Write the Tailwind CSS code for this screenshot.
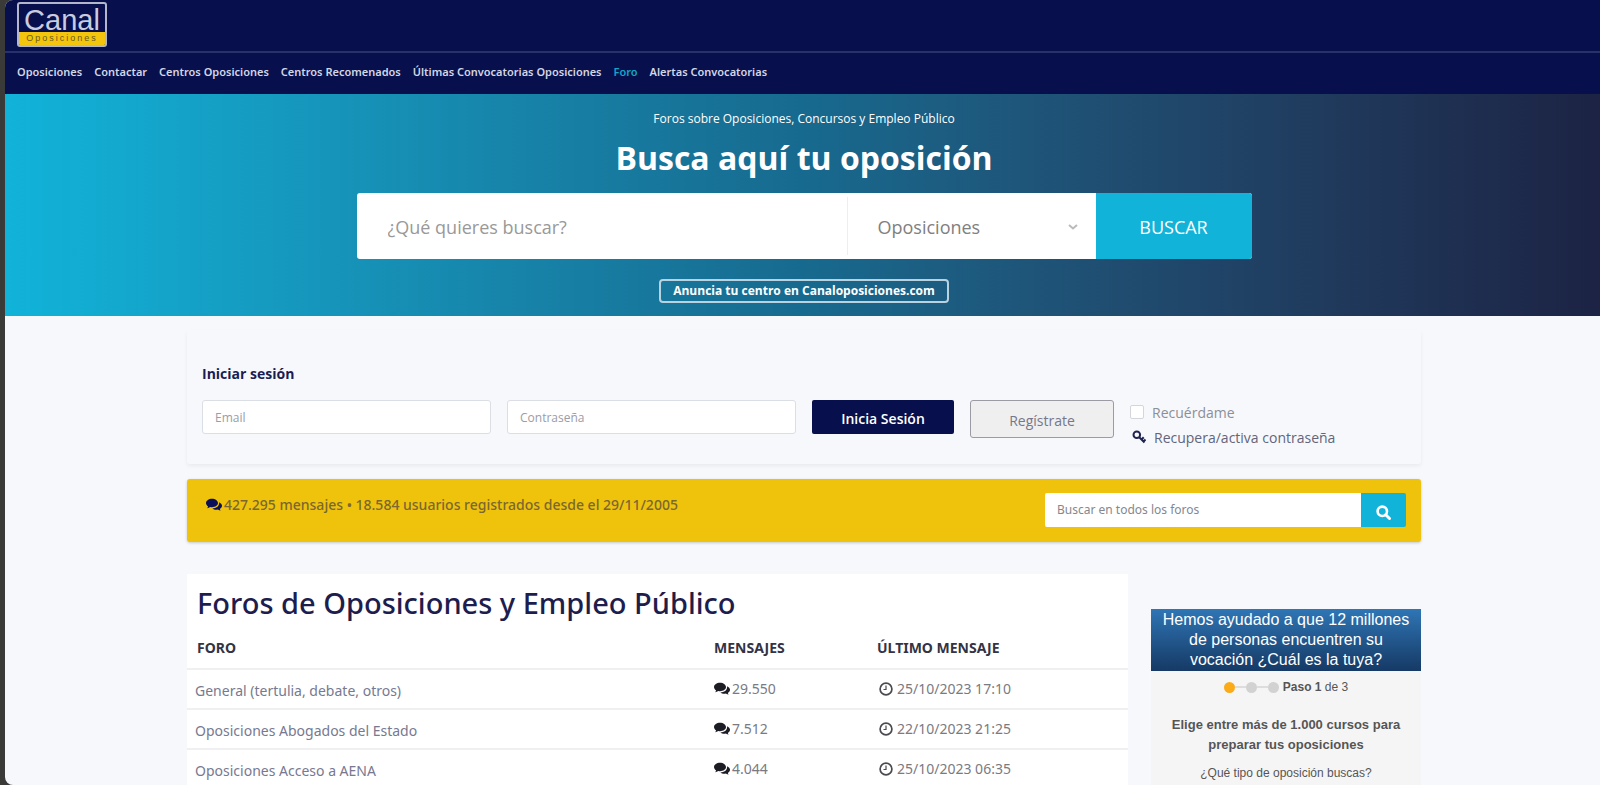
<!DOCTYPE html>
<html lang="es">
<head>
<meta charset="utf-8">
<title>Foros de Oposiciones y Empleo Público</title>
<script src="https://cdn.jsdelivr.net/npm/@tailwindcss/browser@4"></script>
</head>
<body class="bg-[#3a3a38] font-['Open_Sans','Noto_Sans',sans-serif] text-[#6c6f80]">
<svg class="hidden" aria-hidden="true">
  <symbol id="comments" viewBox="0 0 16 14">
    <path fill="currentColor" d="M6 0.8C2.7 0.8 0 2.7 0 5.1c0 1.3.8 2.5 2.1 3.3-.2.7-.6 1.3-1.1 1.8 1.300-.1 2.400-.5 3.300-1.100.5.1 1.100.2 1.700.2 3.300 0 6-1.900 6-4.200S9.300.8 6 .8z"/>
    <path fill="currentColor" d="M13 4.300c.1.300.1.600.1.900 0 2.900-3 5.100-6.700 5.200.9.800 2.300 1.300 3.900 1.300.5 0 1-.1 1.500-.2.800.6 1.900 1 3 1.100-.4-.4-.8-1-1-1.700C15.200 10.200 16 9.100 16 7.800c0-1.500-1.200-2.800-3-3.500z"/>
  </symbol>
  <symbol id="clock" viewBox="0 0 14 14">
    <circle cx="7" cy="7" r="5.900" fill="none" stroke="currentColor" stroke-width="1.700"/>
    <path d="M7 3.500V7.500H4.500" fill="none" stroke="currentColor" stroke-width="1.200"/>
  </symbol>
</svg>
<div class="ml-[5px] flex h-screen flex-col overflow-hidden rounded-l-lg bg-[#f7f8fb]">
  <header class="bg-[#07104d] text-white">
    <div class="flex h-[51px] items-start px-3 pt-[2px]">
      <a href="#" class="flex w-[90px] flex-col overflow-hidden rounded-[3px] border-2 border-[#b4b7cb] text-center font-['Liberation_Sans',sans-serif]">
        <span class="h-[28px] text-[29px] leading-[32px] text-[#c9cce0]">Canal</span>
        <span class="h-[13px] bg-[#f3c60d] text-[9px] leading-[12px] tracking-[2px] text-[#6b5a1c]">Oposiciones</span>
      </a>
    </div>
    <nav class="flex h-[43px] items-center gap-3 border-t-2 border-[#28316a] px-3 pb-[2px] font-['Noto_Sans',sans-serif] text-[11px] font-semibold text-[#d3d6e4]">
      <a href="#">Oposiciones</a>
      <a href="#">Contactar</a>
      <a href="#">Centros Oposiciones</a>
      <a href="#">Centros Recomenados</a>
      <a href="#">Últimas Convocatorias Oposiciones</a>
      <a href="#" class="text-[#12a6c8]">Foro</a>
      <a href="#">Alertas Convocatorias</a>
    </nav>
  </header>

  <section class="flex h-[222px] shrink-0 flex-col items-center bg-linear-to-r from-[#11b3d9] via-[#176a8f] via-50% to-[#1c2344] pt-4 pl-[3px] text-white">
    <p class="text-[12px] leading-[18px]">Foros sobre Oposiciones, Concursos y Empleo Público</p>
    <h2 class="mt-2 text-[32px] leading-[44px] font-bold">Busca aquí tu oposición</h2>
    <form class="mt-[13px] flex h-[66px] w-full max-w-[895px] overflow-hidden rounded-[3px] bg-white text-[18px] text-[#808080]">
      <input type="text" aria-label="¿Qué quieres buscar?" placeholder="¿Qué quieres buscar?" class="my-1 min-w-0 flex-1 border-r border-[#eeeeee] px-[31px] pt-[2px] placeholder:text-[#999999]">
      <div class="relative w-[248px]">
        <select aria-label="Categoría" class="h-full w-full appearance-none px-[30px] pt-[2px]"><option>Oposiciones</option></select>
        <svg class="pointer-events-none absolute top-[31px] right-[18px] h-[6px] w-[10px] text-[#bbbbbb]" viewBox="0 0 10 6"><path d="M1 1l4 3.500L9 1" fill="none" stroke="currentColor" stroke-width="2"/></svg>
      </div>
      <button type="submit" class="w-[156px] bg-[#11b3d9] pt-[2px] text-white">BUSCAR</button>
    </form>
    <a href="#" class="mt-5 rounded-[4px] border-2 border-[#b9d2e0] px-3 text-[12px] leading-[20px] font-bold">Anuncia tu centro en Canaloposiciones.com</a>
  </section>

  <main class="ml-[3px] flex w-full max-w-[1234px] flex-col self-center">
    <section class="mt-[14px] h-[134px] rounded-[3px] px-[15px] pt-[34px] shadow-[0_2px_4px_rgba(0,0,0,0.06)]">
      <h3 class="text-[14px] leading-5 font-bold text-[#1a1d52]">Iniciar sesión</h3>
      <form class="mt-4 flex items-start gap-4 text-[14px]">
        <input type="email" aria-label="Email" placeholder="Email" class="h-[34px] min-w-0 flex-1 rounded-[3px] border border-[#dcdee5] bg-white px-3 text-[12px] placeholder:text-[#9a9da6]">
        <input type="password" aria-label="Contraseña" placeholder="Contraseña" class="h-[34px] min-w-0 flex-1 rounded-[3px] border border-[#dcdee5] bg-white px-3 text-[12px] placeholder:text-[#9a9da6]">
        <button type="submit" class="h-[34px] w-[142px] rounded-[2px] bg-[#07104d] pt-[2px] font-semibold text-white">Inicia Sesión</button>
        <button type="button" class="h-[38px] w-[144px] rounded-[3px] border border-[#9a9ba5] bg-[#efefef] pt-[2px] text-[#75778a]">Regístrate</button>
        <div class="w-[276px]">
          <label class="flex h-[24px] items-center gap-2 text-[#8c8e98]"><input type="checkbox" class="size-[14px] appearance-none rounded-[2px] border border-[#d5d6dc] bg-white">Recuérdame</label>
          <a href="#" class="flex h-[26px] items-center gap-2 pl-[2px] text-[#62657c]">
            <svg class="size-[14px] text-[#1f2350]" viewBox="0 0 14 14"><circle cx="4.800" cy="4.800" r="3.300" fill="none" stroke="currentColor" stroke-width="2"/><path d="M7 7l5.500 5.500M9.500 9.500l2.200-2.200M11.500 11.500l2-2" fill="none" stroke="currentColor" stroke-width="2"/></svg>
            Recupera/activa contraseña</a>
        </div>
      </form>
    </section>

    <section class="mt-[15px] flex h-[63px] items-start justify-between rounded-[3px] bg-[#efc30c] px-[15px] pt-[14px] shadow-[0_1px_3px_rgba(0,0,0,0.2)]">
      <p class="flex items-center gap-[2px] pl-1 font-['Noto_Sans',sans-serif] text-[14px] leading-6 font-medium text-[#7a6731]"><svg class="h-[14px] w-4 text-[#0b1058]"><use href="#comments"/></svg>427.295 mensajes • 18.584 usuarios registrados desde el 29/11/2005</p>
      <form class="flex h-[34px] w-[361px]">
        <input type="text" aria-label="Buscar en todos los foros" placeholder="Buscar en todos los foros" class="min-w-0 flex-1 rounded-l-[2px] bg-white px-3 font-['Noto_Sans',sans-serif] text-[12px] placeholder:text-[#85878e]">
        <button type="submit" aria-label="Buscar" class="flex w-[45px] items-center justify-center rounded-r-[2px] bg-[#11b3d9] pt-1 text-white">
          <svg class="size-[15px]" viewBox="0 0 15 15"><circle cx="6.300" cy="6.300" r="4.700" fill="none" stroke="currentColor" stroke-width="2.600"/><path d="M9.700 9.700l3.800 3.800" stroke="currentColor" stroke-width="3" stroke-linecap="round"/></svg>
        </button>
      </form>
    </section>

    <div class="mt-8 flex items-start gap-[23px]">
      <section class="min-w-0 flex-1 bg-white pt-2">
        <h1 class="pl-[10px] font-['Noto_Sans',sans-serif] text-[29px] leading-[42px] font-medium text-[#1d1d4e]">Foros de Oposiciones y Empleo Público</h1>
        <table class="w-full table-fixed text-left font-['Noto_Sans',sans-serif] text-[14px] leading-[22px]">
          <colgroup><col><col class="w-[163px]"><col class="w-[251px]"></colgroup>
          <thead class="text-[#333344]">
            <tr class="h-[45px] border-b-2 border-[#f0f0f3]"><th class="pt-1 pl-[10px] font-bold">FORO</th><th class="pt-1 font-bold">MENSAJES</th><th class="pt-1 font-bold">ÚLTIMO MENSAJE</th></tr>
          </thead>
          <tbody class="text-[#7a7a82]">
            <tr class="h-[40px] border-b-2 border-[#f0f0f3]">
              <td class="pt-1 pl-2 text-[#777990]"><a href="#">General (tertulia, debate, otros)</a></td>
              <td><span class="flex items-center gap-[2px]"><svg class="h-[14px] w-4 text-[#1c1c24]"><use href="#comments"/></svg>29.550</span></td>
              <td><span class="flex items-center gap-1 pl-[2px]"><svg class="size-[14px] text-[#4a4a50]"><use href="#clock"/></svg>25/10/2023 17:10</span></td>
            </tr>
            <tr class="h-[40px] border-b-2 border-[#f0f0f3]">
              <td class="pt-1 pl-2 text-[#777990]"><a href="#">Oposiciones Abogados del Estado</a></td>
              <td><span class="flex items-center gap-[2px]"><svg class="h-[14px] w-4 text-[#1c1c24]"><use href="#comments"/></svg>7.512</span></td>
              <td><span class="flex items-center gap-1 pl-[2px]"><svg class="size-[14px] text-[#4a4a50]"><use href="#clock"/></svg>22/10/2023 21:25</span></td>
            </tr>
            <tr class="h-[40px] border-b-2 border-[#f0f0f3]">
              <td class="pt-1 pl-2 text-[#777990]"><a href="#">Oposiciones Acceso a AENA</a></td>
              <td><span class="flex items-center gap-[2px]"><svg class="h-[14px] w-4 text-[#1c1c24]"><use href="#comments"/></svg>4.044</span></td>
              <td><span class="flex items-center gap-1 pl-[2px]"><svg class="size-[14px] text-[#4a4a50]"><use href="#clock"/></svg>25/10/2023 06:35</span></td>
            </tr>
          </tbody>
        </table>
      </section>
      <aside class="mt-[35px] w-[270px] bg-[#f5f5f5] pb-4 text-center font-['Liberation_Sans',sans-serif] text-[#555555]">
        <h2 class="bg-linear-to-b from-[#2f76b5] to-[#163a66] px-2 pt-px pb-px text-[16px] leading-5 text-white">Hemos ayudado a que 12 millones de personas encuentren su vocación ¿Cuál es la tuya?</h2>
        <div class="mt-[6px] flex h-5 items-center justify-center text-[12px]">
          <span class="size-[11px] rounded-full bg-[#fbab18]"></span><span class="h-[2px] w-[11px] bg-[#dddddd]"></span>
          <span class="size-[11px] rounded-full bg-[#d2d2d2]"></span><span class="h-[2px] w-[11px] bg-[#dddddd]"></span>
          <span class="size-[11px] rounded-full bg-[#d2d2d2]"></span>
          <span class="ml-1"><b>Paso 1</b> de 3</span>
        </div>
        <p class="mt-[18px] px-3 text-[13px] leading-5 font-bold">Elige entre más de 1.000 cursos para preparar tus oposiciones</p>
        <p class="mt-2 text-[12px] leading-5">¿Qué tipo de oposición buscas?</p>
      </aside>
    </div>
  </main>
</div>
</body>
</html>
